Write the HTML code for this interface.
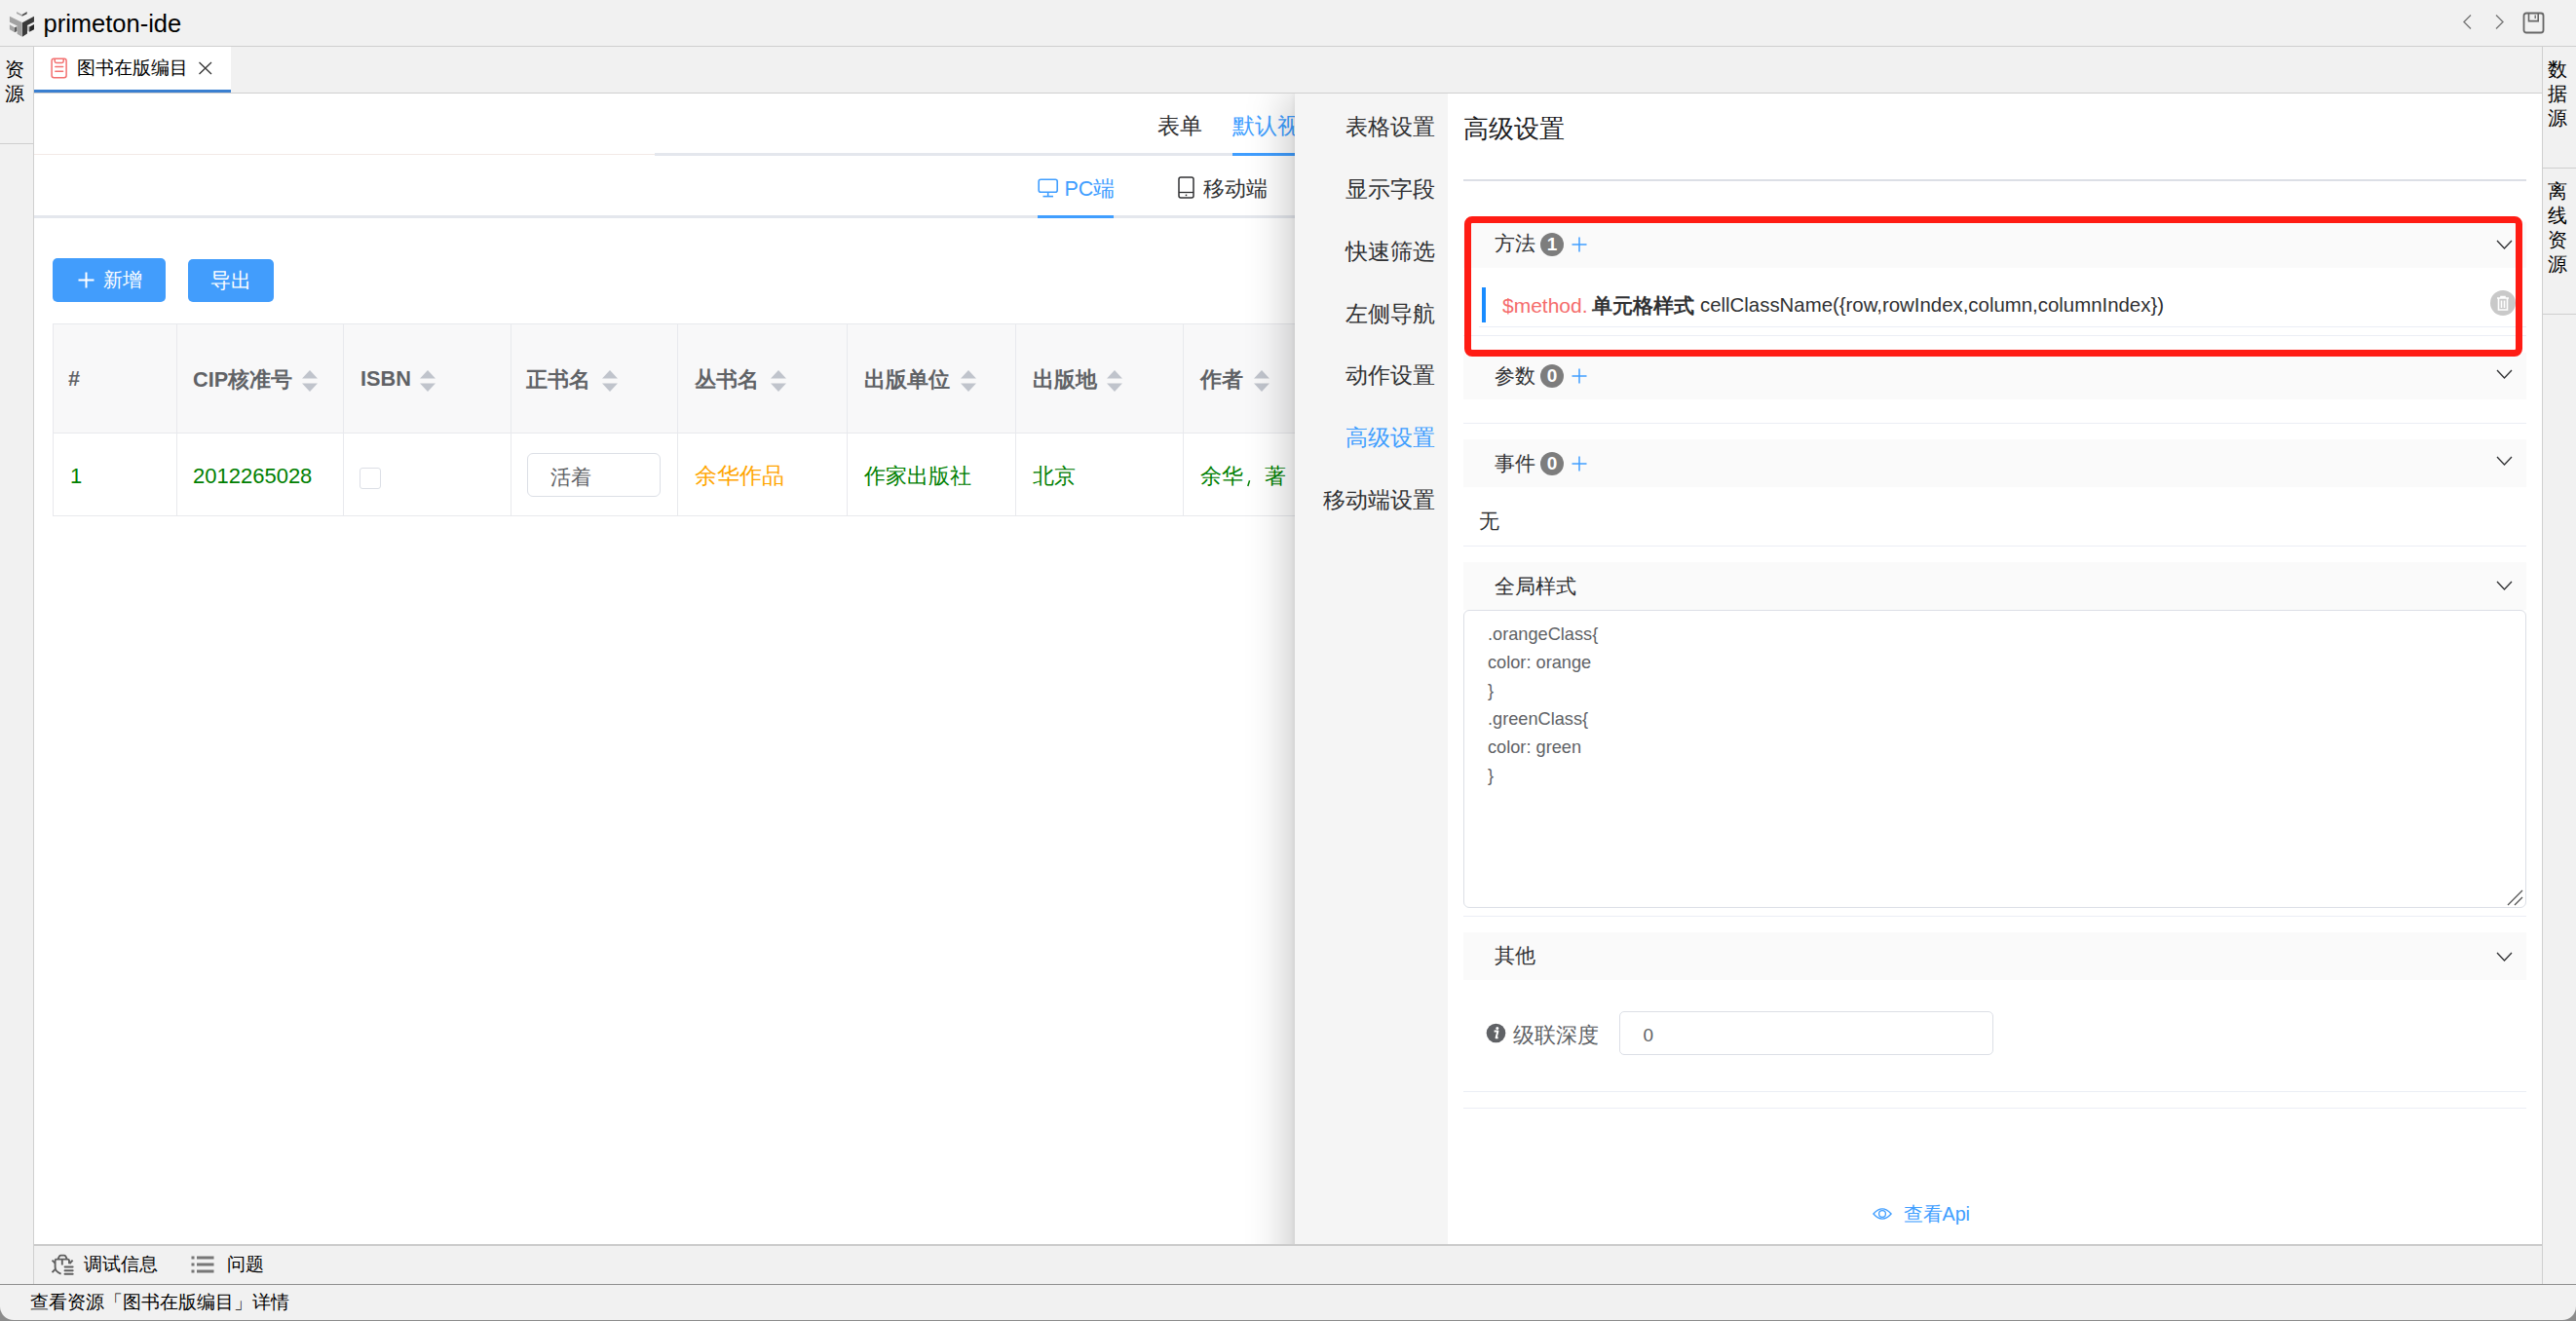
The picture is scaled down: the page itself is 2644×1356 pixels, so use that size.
<!DOCTYPE html>
<html><head><meta charset="utf-8">
<style>
*{box-sizing:border-box;margin:0;padding:0}
html,body{width:2644px;height:1356px;overflow:hidden;background:#8c8c8c}
body{font-family:"Liberation Sans",sans-serif;position:relative;color:#303133}
.a{position:absolute}
.t{position:absolute;white-space:nowrap;line-height:1}
.win{position:absolute;left:0;top:0;width:2644px;height:1355px;background:#f1f1f1;border-radius:0 0 14px 14px;overflow:hidden}
.hl{position:absolute;height:1px}
.vl{position:absolute;width:1px}
.th{position:absolute;top:333px;height:112px;background:#f8f8f9}
.cb{position:absolute;top:333px;height:197px;width:1px;background:#e8e9ed}
.htx{font-weight:bold;color:#606266;font-size:21.7px}
.sort{position:absolute;width:16px;height:22px}
.nav{position:absolute;right:0;font-size:22.5px;color:#303133;white-space:nowrap;line-height:1}
.chd{position:absolute;left:1502px;width:1091px;background:#fafafa}
.ctl{font-size:21px;color:#303133}
.badge{position:absolute;width:24px;height:24px;border-radius:12px;background:#7d7d7d;color:#fff;font-weight:bold;font-size:19px;text-align:center;line-height:24px}
.plus{position:absolute;width:16px;height:16px}
.chev{position:absolute;width:17px;height:10px}
</style></head><body>
<div class="win">
  <!-- title bar -->
  <div class="a" style="left:0;top:0;width:2644px;height:47px;background:#f1f1f1"></div>
  <div class="hl" style="left:0;top:47px;width:2644px;background:#cfcfcf"></div>
  <svg class="a" style="left:5px;top:5px" width="40" height="37" viewBox="0 0 1428 1321">
    <polygon points="430,250 630,360 630,420 430,320" fill="#a8a8a8"/>
    <polygon points="630,360 810,250 810,330 630,420" fill="#4a4a4a"/>
    <polygon points="175,420 630,645 630,1165 450,1060 450,770 175,635" fill="#a2a2a2"/>
    <polygon points="640,650 1070,420 1070,625 820,750 820,1050 640,1165" fill="#3a3a3a"/>
    <polygon points="175,720 360,830 360,1010 175,900" fill="#a6a6a6"/>
    <polygon points="360,830 440,790 440,960 360,1010" fill="#555"/>
    <polygon points="830,760 900,800 900,990 830,950" fill="#b0b0b0"/>
    <polygon points="900,800 1070,710 1070,900 900,990" fill="#262626"/>
  </svg>
  <div class="t" style="left:44.5px;top:11.5px;font-size:25.5px;color:#000">primeton-ide</div>
  <svg class="a" style="left:2526px;top:14px" width="48" height="18" viewBox="0 0 48 18">
    <polyline points="10,1.5 3,8.5 10,15.5" fill="none" stroke="#777" stroke-width="1.4"/>
    <polyline points="36,1.5 43,8.5 36,15.5" fill="none" stroke="#777" stroke-width="1.4"/>
  </svg>
  <svg class="a" style="left:2589px;top:12px" width="24" height="23" viewBox="0 0 24 23">
    <rect x="1.5" y="1.5" width="20" height="20" rx="2.5" fill="none" stroke="#666" stroke-width="1.8"/>
    <path d="M6.5 1.5 V9.6 H16.2 V1.5" fill="none" stroke="#666" stroke-width="1.6"/>
    <line x1="13.2" y1="3.6" x2="13.2" y2="7" stroke="#666" stroke-width="1.3"/>
  </svg>

  <!-- left panel -->
  <div class="a" style="left:0;top:48px;width:34px;height:1270px;background:#f1f1f1"></div>
  <div class="vl" style="left:34px;top:48px;height:1270px;background:#cfcfcf"></div>
  <div class="hl" style="left:0;top:147px;width:34px;background:#cfcfcf"></div>
  <div class="t" style="left:5px;top:59px;font-size:19.5px;line-height:25px;color:#000;width:22px;white-space:normal">资<br>源</div>

  <!-- right panel -->
  <div class="a" style="left:2610px;top:48px;width:34px;height:1270px;background:#f1f1f1"></div>
  <div class="vl" style="left:2609px;top:48px;height:1270px;background:#cfcfcf"></div>
  <div class="hl" style="left:2610px;top:172px;width:34px;background:#cfcfcf"></div>
  <div class="hl" style="left:2610px;top:322px;width:34px;background:#cfcfcf"></div>
  <div class="t" style="left:2615px;top:59px;font-size:19.5px;line-height:25px;color:#000;width:22px;white-space:normal">数<br>据<br>源</div>
  <div class="t" style="left:2615px;top:184px;font-size:19.5px;line-height:25px;color:#000;width:22px;white-space:normal">离<br>线<br>资<br>源</div>

  <!-- tab bar -->
  <div class="hl" style="left:35px;top:95px;width:2575px;background:#cfcfcf"></div>
  <div class="a" style="left:35px;top:48px;width:202px;height:47px;background:#fff"></div>
  <div class="a" style="left:35px;top:92px;width:202px;height:3px;background:#3a7fd0"></div>
  <svg class="a" style="left:52px;top:59px" width="18" height="22" viewBox="0 0 18 22">
    <rect x="1.1" y="1.2" width="15" height="19.6" rx="2.2" fill="none" stroke="#f37070" stroke-width="1.5"/>
    <path d="M4.2 1.2 V3.8 Q4.2 5.4 5.8 5.4 H11.6 Q13.2 5.4 13.2 3.8 V1.2" fill="none" stroke="#f37070" stroke-width="1.5"/>
    <line x1="4.8" y1="9.6" x2="12.6" y2="9.6" stroke="#f37070" stroke-width="1.5" stroke-linecap="round"/>
    <line x1="4.8" y1="14.2" x2="12.6" y2="14.2" stroke="#f37070" stroke-width="1.5" stroke-linecap="round"/>
  </svg>
  <div class="t" style="left:79px;top:60px;font-size:19px;color:#000">图书在版编目</div>
  <svg class="a" style="left:203px;top:63px" width="16" height="14" viewBox="0 0 16 14">
    <path d="M1.5 1 L14 13 M14 1 L1.5 13" stroke="#333" stroke-width="1.3" fill="none"/>
  </svg>

  <!-- content area -->
  <div class="a" style="left:35px;top:96px;width:2574px;height:1181px;background:#fff"></div>
  
  <div class="t" style="left:1188px;top:119px;font-size:22.5px;color:#303133">表单</div>
  <div class="t" style="left:1265px;top:119px;font-size:22.5px;color:#409eff">默认视图</div>
  <div class="a" style="left:35px;top:158px;width:637px;height:1px;background:#f3e9e6"></div>
  <div class="a" style="left:672px;top:157px;width:657px;height:3px;background:#e4e7ed"></div>
  <div class="a" style="left:1265px;top:157px;width:64px;height:3px;background:#409eff"></div>
  <svg class="a" style="left:1065px;top:183px" width="22" height="20" viewBox="0 0 22 20">
    <rect x="1.2" y="1.2" width="19" height="13" rx="2" fill="none" stroke="#409eff" stroke-width="1.6"/>
    <line x1="10.7" y1="14.5" x2="10.7" y2="18" stroke="#409eff" stroke-width="1.6"/>
    <line x1="5.5" y1="18.6" x2="16" y2="18.6" stroke="#409eff" stroke-width="1.6"/>
  </svg>
  <div class="t" style="left:1092.5px;top:183.5px;font-size:21.5px;color:#409eff">PC端</div>
  <svg class="a" style="left:1209px;top:181px" width="17" height="23" viewBox="0 0 17 23">
    <rect x="1" y="1" width="15" height="21" rx="2" fill="none" stroke="#303133" stroke-width="1.5"/>
    <line x1="1" y1="16.5" x2="16" y2="16.5" stroke="#303133" stroke-width="1.3"/>
    <circle cx="8.5" cy="19.3" r="0.9" fill="#303133"/>
  </svg>
  <div class="t" style="left:1235px;top:182.5px;font-size:22px;color:#303133">移动端</div>
  <div class="a" style="left:35px;top:221px;width:1294px;height:3px;background:#e4e7ed"></div>
  <div class="a" style="left:1065px;top:221px;width:78px;height:3px;background:#409eff"></div>

  <div class="a" style="left:54px;top:265px;width:116px;height:45px;border-radius:5px;background:#429dfc"></div>
  <svg class="a" style="left:80px;top:279px" width="17" height="17" viewBox="0 0 17 17">
    <path d="M8.5 0.5 V16.5 M0.5 8.5 H16.5" stroke="#fff" stroke-width="2"/>
  </svg>
  <div class="t" style="left:106px;top:277px;font-size:20px;color:#fff">新增</div>
  <div class="a" style="left:193px;top:266px;width:88px;height:44px;border-radius:5px;background:#429dfc"></div>
  <div class="t" style="left:216px;top:277px;font-size:21px;color:#fff">导出</div>

  <!-- table -->
  <div class="th" style="left:54px;width:1275px"></div>
  <div class="a" style="left:54px;top:332px;width:1275px;height:1px;background:#e8e9ed"></div>
  <div class="a" style="left:54px;top:444px;width:1275px;height:1px;background:#e8e9ed"></div>
  <div class="a" style="left:54px;top:529px;width:1275px;height:1px;background:#e8e9ed"></div>
  <div class="cb" style="left:54px;top:332px;height:198px"></div>
  <div class="cb" style="left:181px"></div>
  <div class="cb" style="left:352px"></div>
  <div class="cb" style="left:524px"></div>
  <div class="cb" style="left:695px"></div>
  <div class="cb" style="left:869px"></div>
  <div class="cb" style="left:1042px"></div>
  <div class="cb" style="left:1214px"></div>
  <div class="t htx" style="left:70px;top:378px">#</div>
  <div class="t htx" style="left:198px;top:378.5px">CIP核准号</div>
  <div class="t htx" style="left:370px;top:378px">ISBN</div>
  <div class="t htx" style="left:540px;top:379px">正书名</div>
  <div class="t htx" style="left:713px;top:379px">丛书名</div>
  <div class="t htx" style="left:887px;top:379px">出版单位</div>
  <div class="t htx" style="left:1060px;top:379px">出版地</div>
  <div class="t htx" style="left:1232px;top:379px">作者</div>
  <svg class="sort" style="left:310px;top:380px" viewBox="0 0 16 22"><polygon points="8,0 16,8.5 0,8.5" fill="#c0c4cc"/><polygon points="0,13.5 16,13.5 8,22" fill="#c0c4cc"/></svg>
  <svg class="sort" style="left:431px;top:380px" viewBox="0 0 16 22"><polygon points="8,0 16,8.5 0,8.5" fill="#c0c4cc"/><polygon points="0,13.5 16,13.5 8,22" fill="#c0c4cc"/></svg>
  <svg class="sort" style="left:618px;top:380px" viewBox="0 0 16 22"><polygon points="8,0 16,8.5 0,8.5" fill="#c0c4cc"/><polygon points="0,13.5 16,13.5 8,22" fill="#c0c4cc"/></svg>
  <svg class="sort" style="left:791px;top:380px" viewBox="0 0 16 22"><polygon points="8,0 16,8.5 0,8.5" fill="#c0c4cc"/><polygon points="0,13.5 16,13.5 8,22" fill="#c0c4cc"/></svg>
  <svg class="sort" style="left:986px;top:380px" viewBox="0 0 16 22"><polygon points="8,0 16,8.5 0,8.5" fill="#c0c4cc"/><polygon points="0,13.5 16,13.5 8,22" fill="#c0c4cc"/></svg>
  <svg class="sort" style="left:1136px;top:380px" viewBox="0 0 16 22"><polygon points="8,0 16,8.5 0,8.5" fill="#c0c4cc"/><polygon points="0,13.5 16,13.5 8,22" fill="#c0c4cc"/></svg>
  <svg class="sort" style="left:1287px;top:380px" viewBox="0 0 16 22"><polygon points="8,0 16,8.5 0,8.5" fill="#c0c4cc"/><polygon points="0,13.5 16,13.5 8,22" fill="#c0c4cc"/></svg>
  
  <div class="t" style="left:72px;top:478px;font-size:22px;color:#008000">1</div>
  <div class="t" style="left:198px;top:478px;font-size:22px;color:#008000">2012265028</div>
  <div class="a" style="left:369px;top:480px;width:22px;height:22px;border:1px solid #dcdfe6;border-radius:3px;background:#fff"></div>
  <div class="a" style="left:541px;top:465px;width:137px;height:45px;border:1px solid #dcdfe6;border-radius:6px;background:#fff"></div>
  <div class="t" style="left:565px;top:478.5px;font-size:21px;color:#606266">活着</div>
  <div class="t" style="left:713px;top:478px;font-size:22.5px;color:#ffa500">余华作品</div>
  <div class="t" style="left:887px;top:478px;font-size:22.3px;color:#008000">作家出版社</div>
  <div class="t" style="left:1060px;top:478px;font-size:22.3px;color:#008000">北京</div>
  <div class="t" style="left:1232px;top:478px;font-size:22.3px;color:#008000">余华　著</div>
  <svg class="a" style="left:1278px;top:491px" width="8" height="10" viewBox="0 0 8 10"><path d="M4.6 2.3 L2.8 7.9" stroke="#008000" stroke-width="1.5" stroke-linecap="butt"/></svg>

  
  <!-- drawer -->
  <div class="a" style="left:35px;top:96px;width:2574px;height:1181px;overflow:hidden"><div class="a" style="left:1294px;top:0;width:1400px;height:1400px;background:#fff;box-shadow:-8px 0 40px rgba(0,0,0,0.21),-1px 0 5px rgba(0,0,0,0.06)"></div></div>
  <div class="a" style="left:1329px;top:96px;width:157px;height:1181px;background:#f5f5f5"></div>
  <div class="a" style="left:1329px;top:0;width:144px;height:600px">
    <div class="nav" style="top:119.5px">表格设置</div>
    <div class="nav" style="top:183.5px">显示字段</div>
    <div class="nav" style="top:247.5px">快速筛选</div>
    <div class="nav" style="top:311.5px">左侧导航</div>
    <div class="nav" style="top:374.8px">动作设置</div>
    <div class="nav" style="top:438.8px;color:#409eff">高级设置</div>
    <div class="nav" style="top:502.8px">移动端设置</div>
  </div>
  <div class="t" style="left:1502px;top:118.5px;font-size:26px;color:#1d1d1f">高级设置</div>
  <div class="a" style="left:1502px;top:184px;width:1091px;height:2px;background:#dcdfe6"></div>

  <!-- collapse 1 -->
  <div class="chd" style="top:228px;height:47px"></div>
  <div class="t ctl" style="left:1534px;top:239px">方法</div>
  <div class="badge" style="left:1581px;top:239px">1</div>
  <svg class="plus" style="left:1613px;top:243px" viewBox="0 0 16 16"><path d="M8 0.5 V15.5 M0.5 8 H15.5" stroke="#409eff" stroke-width="1.5"/></svg>
  <svg class="chev" style="left:2562px;top:246px" viewBox="0 0 17 10"><polyline points="1,1 8.5,9 16,1" fill="none" stroke="#303133" stroke-width="1.3"/></svg>
  <div class="a" style="left:1521px;top:295px;width:4px;height:36px;background:#1a8cff"></div>
  <div class="t" style="left:1542px;top:303px;font-size:21px;color:#f56c6c">$method.</div>
  <div class="t" style="left:1634px;top:303px;font-size:21px;color:#303133;font-weight:bold">单元格样式</div>
  <div class="t" style="left:1745px;top:303px;font-size:20.4px;color:#303133">cellClassName({row,rowIndex,column,columnIndex})</div>
  <div class="a" style="left:2556px;top:298px;width:26px;height:26px;border-radius:13px;background:#c9c9c9"></div>
  <svg class="a" style="left:2561px;top:302px" width="16" height="18" viewBox="0 0 16 18">
    <path d="M2 4 H14 M6 4 V2.5 H10 V4 M3.5 4 V16 H12.5 V4 M6.5 6.5 V14 M9.5 6.5 V14" fill="none" stroke="#fff" stroke-width="1.6"/>
  </svg>
  <div class="a" style="left:1518px;top:335px;width:1075px;height:1px;background:#ebeef5"></div>
  <div class="a" style="left:1502px;top:344px;width:1091px;height:1px;background:#ebeef5"></div>

  <!-- collapse 2 -->
  <div class="chd" style="top:362px;height:48px"></div>
  <div class="t ctl" style="left:1534px;top:375px">参数</div>
  <div class="badge" style="left:1581px;top:374px">0</div>
  <svg class="plus" style="left:1613px;top:378px" viewBox="0 0 16 16"><path d="M8 0.5 V15.5 M0.5 8 H15.5" stroke="#409eff" stroke-width="1.5"/></svg>
  <svg class="chev" style="left:2562px;top:379px" viewBox="0 0 17 10"><polyline points="1,1 8.5,9 16,1" fill="none" stroke="#303133" stroke-width="1.3"/></svg>
  <div class="a" style="left:1502px;top:434px;width:1091px;height:1px;background:#ebeef5"></div>

  <!-- collapse 3 -->
  <div class="chd" style="top:451px;height:49px"></div>
  <div class="t ctl" style="left:1534px;top:465px">事件</div>
  <div class="badge" style="left:1581px;top:464px">0</div>
  <svg class="plus" style="left:1613px;top:468px" viewBox="0 0 16 16"><path d="M8 0.5 V15.5 M0.5 8 H15.5" stroke="#409eff" stroke-width="1.5"/></svg>
  <svg class="chev" style="left:2562px;top:468px" viewBox="0 0 17 10"><polyline points="1,1 8.5,9 16,1" fill="none" stroke="#303133" stroke-width="1.3"/></svg>
  <div class="t" style="left:1518px;top:524px;font-size:21px;color:#303133">无</div>
  <div class="a" style="left:1502px;top:560px;width:1091px;height:1px;background:#ebeef5"></div>

  <!-- collapse 4 -->
  <div class="chd" style="top:577px;height:49px"></div>
  <div class="t ctl" style="left:1534px;top:591px">全局样式</div>
  <svg class="chev" style="left:2562px;top:596px" viewBox="0 0 17 10"><polyline points="1,1 8.5,9 16,1" fill="none" stroke="#303133" stroke-width="1.3"/></svg>
  <div class="a" style="left:1502px;top:626px;width:1091px;height:306px;border:1px solid #dcdfe6;border-radius:6px;background:#fff"></div>
  <div class="t" style="left:1527px;top:637px;font-size:18.2px;line-height:29px;color:#606266;white-space:pre">.orangeClass{
color: orange
}
.greenClass{
color: green
}</div>
  <svg class="a" style="left:2572px;top:912px" width="18" height="18" viewBox="0 0 18 18">
    <path d="M2 17 L17 2 M9 17 L17 9" stroke="#555" stroke-width="1.3"/>
  </svg>
  <div class="a" style="left:1502px;top:940px;width:1091px;height:1px;background:#ebeef5"></div>

  <!-- collapse 5 -->
  <div class="chd" style="top:957px;height:49px"></div>
  <div class="t ctl" style="left:1534px;top:970px">其他</div>
  <svg class="chev" style="left:2562px;top:977px" viewBox="0 0 17 10"><polyline points="1,1 8.5,9 16,1" fill="none" stroke="#303133" stroke-width="1.3"/></svg>
  <svg class="a" style="left:1525px;top:1050px" width="21" height="21" viewBox="0 0 21 21">
    <circle cx="10.5" cy="10.5" r="9.8" fill="#606266"/>
    <circle cx="11.8" cy="5.4" r="1.5" fill="#fff"/>
    <path d="M8.6 8.6 H12.4 L10.6 15.2 H12.6" fill="none" stroke="#fff" stroke-width="2" stroke-linejoin="round"/>
  </svg>
  <div class="t" style="left:1553px;top:1051.5px;font-size:22.3px;color:#606266">级联深度</div>
  <div class="a" style="left:1662px;top:1038px;width:384px;height:45px;border:1px solid #dcdfe6;border-radius:5px;background:#fff"></div>
  <div class="t" style="left:1686.5px;top:1053px;font-size:19px;color:#606266">0</div>
  <div class="a" style="left:1502px;top:1120px;width:1091px;height:1px;background:#ebeef5"></div>
  <div class="a" style="left:1502px;top:1137px;width:1091px;height:1px;background:#ebeef5"></div>

  <svg class="a" style="left:1922px;top:1238px" width="20" height="16" viewBox="0 0 20 16">
    <path d="M0.9 8 Q10 -2.2 19.1 8 Q10 18.2 0.9 8 Z" fill="none" stroke="#409eff" stroke-width="1.3"/>
    <circle cx="10" cy="8" r="3.4" fill="none" stroke="#409eff" stroke-width="1.3"/>
  </svg>
  <div class="t" style="left:1953.5px;top:1237px;font-size:19.7px;color:#409eff">查看Api</div>
  <!-- red box -->
  <div class="a" style="left:1503px;top:222px;width:1086px;height:144px;border:7px solid #ff1c14;border-radius:8px"></div>


  <!-- bottom bar -->
  <div class="a" style="left:35px;top:1277px;width:2574px;height:2px;background:#cbcbcb"></div>
  <div class="a" style="left:0;top:1318px;width:2644px;height:1px;background:#8f8f8f"></div>
  
  <svg class="a" style="left:50px;top:1284px" width="30" height="28" viewBox="0 0 30 28">
    <path d="M9.8 8.5 Q10.5 4.6 12.5 4.6 H15.8 Q17.8 4.6 18.5 8.5" fill="none" stroke="#5f5f5f" stroke-width="1.9"/>
    <path d="M13.8 14.5 V8.6 M7.2 8.6 H19.5 Q21 8.6 21 10.5 V13.2 M7.2 8.6 Q6.6 9 6.6 11 V16.5 Q6.6 21.5 12.6 23.6" fill="none" stroke="#5f5f5f" stroke-width="1.9"/>
    <path d="M3.5 9.6 L6.6 12.6 M3.5 22.2 L6.6 19 M24.6 9.6 L21.5 13" fill="none" stroke="#5f5f5f" stroke-width="1.9"/>
    <rect x="15.6" y="15.4" width="10" height="2" rx="0.8" fill="#5f5f5f"/>
    <rect x="15.6" y="19.2" width="10" height="2" rx="0.8" fill="#5f5f5f"/>
    <rect x="15.6" y="22.8" width="10" height="2" rx="0.8" fill="#5f5f5f"/>
  </svg>
  <div class="t" style="left:85.5px;top:1288px;font-size:19.3px;color:#000">调试信息</div>
  <svg class="a" style="left:196px;top:1289px" width="24" height="18" viewBox="0 0 24 18">
    <rect x="0.5" y="0.5" width="3" height="3" fill="#777"/><rect x="6" y="0.5" width="17.5" height="3" fill="#777"/>
    <rect x="0.5" y="7.5" width="3" height="3" fill="#777"/><rect x="6" y="7.5" width="17.5" height="3" fill="#777"/>
    <rect x="0.5" y="14.5" width="3" height="3" fill="#777"/><rect x="6" y="14.5" width="17.5" height="3" fill="#777"/>
  </svg>
  <div class="t" style="left:233px;top:1288px;font-size:19.3px;color:#000">问题</div>
  <div class="t" style="left:31px;top:1327px;font-size:19.3px;color:#000">查看资源「图书在版编目」详情</div>

</div>
</body></html>
